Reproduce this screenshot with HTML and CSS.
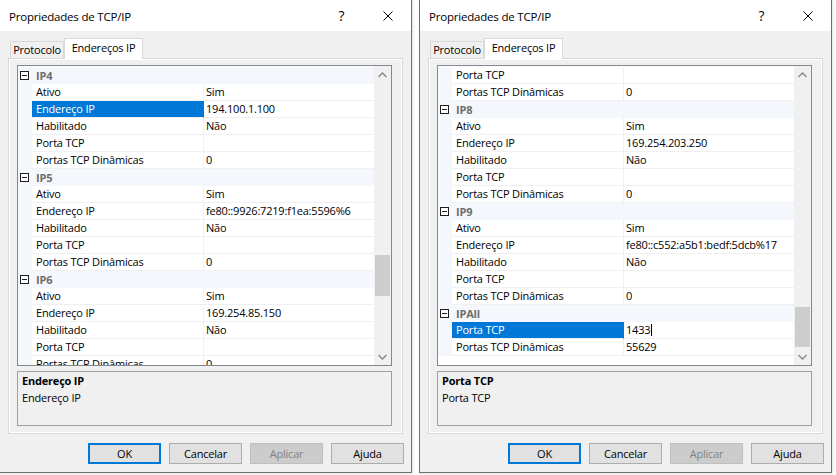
FILE: index.html
```html
<!DOCTYPE html>
<html lang="pt">
<head>
<meta charset="utf-8">
<title>Propriedades de TCP/IP</title>
<link rel="stylesheet" href="styles.css">
</head>
<body>

<div class="window win-left">
  <div class="titlebar">
    <span class="title">Propriedades de TCP/IP</span>
    <div class="cap-btn help">?</div>
    <div class="cap-btn close"><svg width="10" height="10" viewBox="0 0 10 10"><path d="M0.5 0.5L9.5 9.5M9.5 0.5L0.5 9.5" stroke="#000" stroke-width="1" fill="none"/></svg></div>
  </div>
  <div class="client">
    <div class="tabs">
      <div class="tab">Protocolo</div>
      <div class="tab active">Endereços IP</div>
    </div>
    <div class="panel">
      <div class="pg">
        <div class="grid">
          <div class="rows">
            <div class="cat"><span class="box"></span><span class="cat-name">IP4</span></div>
            <div class="prop"><div class="m"></div><div class="n">Ativo</div><div class="v">Sim</div></div>
            <div class="prop sel"><div class="m"></div><div class="n">Endereço IP</div><div class="v">194.100.1.100</div></div>
            <div class="prop"><div class="m"></div><div class="n">Habilitado</div><div class="v">Não</div></div>
            <div class="prop"><div class="m"></div><div class="n">Porta TCP</div><div class="v"></div></div>
            <div class="prop"><div class="m"></div><div class="n">Portas TCP Dinâmicas</div><div class="v">0</div></div>
            <div class="cat"><span class="box"></span><span class="cat-name">IP5</span></div>
            <div class="prop"><div class="m"></div><div class="n">Ativo</div><div class="v">Sim</div></div>
            <div class="prop"><div class="m"></div><div class="n">Endereço IP</div><div class="v">fe80::9926:7219:f1ea:5596%6</div></div>
            <div class="prop"><div class="m"></div><div class="n">Habilitado</div><div class="v">Não</div></div>
            <div class="prop"><div class="m"></div><div class="n">Porta TCP</div><div class="v"></div></div>
            <div class="prop"><div class="m"></div><div class="n">Portas TCP Dinâmicas</div><div class="v">0</div></div>
            <div class="cat"><span class="box"></span><span class="cat-name">IP6</span></div>
            <div class="prop"><div class="m"></div><div class="n">Ativo</div><div class="v">Sim</div></div>
            <div class="prop"><div class="m"></div><div class="n">Endereço IP</div><div class="v">169.254.85.150</div></div>
            <div class="prop"><div class="m"></div><div class="n">Habilitado</div><div class="v">Não</div></div>
            <div class="prop"><div class="m"></div><div class="n">Porta TCP</div><div class="v"></div></div>
            <div class="prop"><div class="m"></div><div class="n">Portas TCP Dinâmicas</div><div class="v">0</div></div>
          </div>
          <div class="scrollbar">
            <div class="arrow"><svg width="9" height="6" viewBox="0 0 9 6"><path d="M0.5 5L4.5 1L8.5 5" stroke="#868686" stroke-width="1.3" fill="none"/></svg></div>
            <div class="track"><div class="thumb thumb-left"></div></div>
            <div class="arrow"><svg width="9" height="6" viewBox="0 0 9 6"><path d="M0.5 1L4.5 5L8.5 1" stroke="#868686" stroke-width="1.3" fill="none"/></svg></div>
          </div>
        </div>
        <div class="desc">
          <div class="desc-title">Endereço IP</div>
          <div class="desc-text">Endereço IP</div>
        </div>
      </div>
    </div>
    <div class="buttons">
      <button class="btn default">OK</button>
      <button class="btn">Cancelar</button>
      <button class="btn disabled">Aplicar</button>
      <button class="btn">Ajuda</button>
    </div>
  </div>
</div>

<div class="window win-right">
  <div class="titlebar">
    <span class="title">Propriedades de TCP/IP</span>
    <div class="cap-btn help">?</div>
    <div class="cap-btn close"><svg width="10" height="10" viewBox="0 0 10 10"><path d="M0.5 0.5L9.5 9.5M9.5 0.5L0.5 9.5" stroke="#000" stroke-width="1" fill="none"/></svg></div>
  </div>
  <div class="client">
    <div class="tabs">
      <div class="tab">Protocolo</div>
      <div class="tab active">Endereços IP</div>
    </div>
    <div class="panel">
      <div class="pg">
        <div class="grid">
          <div class="rows">
            <div class="prop"><div class="m"></div><div class="n">Porta TCP</div><div class="v"></div></div>
            <div class="prop"><div class="m"></div><div class="n">Portas TCP Dinâmicas</div><div class="v">0</div></div>
            <div class="cat"><span class="box"></span><span class="cat-name">IP8</span></div>
            <div class="prop"><div class="m"></div><div class="n">Ativo</div><div class="v">Sim</div></div>
            <div class="prop"><div class="m"></div><div class="n">Endereço IP</div><div class="v">169.254.203.250</div></div>
            <div class="prop"><div class="m"></div><div class="n">Habilitado</div><div class="v">Não</div></div>
            <div class="prop"><div class="m"></div><div class="n">Porta TCP</div><div class="v"></div></div>
            <div class="prop"><div class="m"></div><div class="n">Portas TCP Dinâmicas</div><div class="v">0</div></div>
            <div class="cat"><span class="box"></span><span class="cat-name">IP9</span></div>
            <div class="prop"><div class="m"></div><div class="n">Ativo</div><div class="v">Sim</div></div>
            <div class="prop"><div class="m"></div><div class="n">Endereço IP</div><div class="v">fe80::c552:a5b1:bedf:5dcb%17</div></div>
            <div class="prop"><div class="m"></div><div class="n">Habilitado</div><div class="v">Não</div></div>
            <div class="prop"><div class="m"></div><div class="n">Porta TCP</div><div class="v"></div></div>
            <div class="prop"><div class="m"></div><div class="n">Portas TCP Dinâmicas</div><div class="v">0</div></div>
            <div class="cat"><span class="box"></span><span class="cat-name">IPAll</span></div>
            <div class="prop sel"><div class="m"></div><div class="n">Porta TCP</div><div class="v">1433<span class="caret"></span></div></div>
            <div class="prop"><div class="m"></div><div class="n">Portas TCP Dinâmicas</div><div class="v">55629</div></div>
          </div>
          <div class="scrollbar">
            <div class="arrow"><svg width="9" height="6" viewBox="0 0 9 6"><path d="M0.5 5L4.5 1L8.5 5" stroke="#868686" stroke-width="1.3" fill="none"/></svg></div>
            <div class="track"><div class="thumb thumb-right"></div></div>
            <div class="arrow"><svg width="9" height="6" viewBox="0 0 9 6"><path d="M0.5 1L4.5 5L8.5 1" stroke="#868686" stroke-width="1.3" fill="none"/></svg></div>
          </div>
        </div>
        <div class="desc">
          <div class="desc-title">Porta TCP</div>
          <div class="desc-text">Porta TCP</div>
        </div>
      </div>
    </div>
    <div class="buttons">
      <button class="btn default">OK</button>
      <button class="btn">Cancelar</button>
      <button class="btn disabled">Aplicar</button>
      <button class="btn">Ajuda</button>
    </div>
  </div>
</div>

</body>
</html>
```
FILE: styles.css
```css
* { box-sizing: border-box; }

html, body {
  margin: 0;
  padding: 0;
  background: #ffffff;
}

body {
  display: flex;
  align-items: flex-start;
  gap: 7px;
  font-family: "Open Sans", "Noto Sans", sans-serif;
  font-size: 11px;
  letter-spacing: -0.2px;
  color: #000;
  overflow: hidden;
  height: 475px;
}

.window {
  width: 413px;
  height: 474px;
  margin-top: -1px;
  border: 1px solid #6f6f6f;
  background: #f0f0f0;
  display: flex;
  flex-direction: column;
  box-shadow: 1px 1px 3px rgba(0,0,0,0.12);
}

.win-left { margin-left: -1px; }

/* title bar */
.titlebar {
  height: 31px;
  background: #ffffff;
  display: flex;
  align-items: center;
  flex: none;
}

.title {
  flex: 1;
  padding-left: 9px;
  font-size: 11.5px;
  padding-top: 1px;
}

.cap-btn {
  width: 46px;
  height: 31px;
  display: flex;
  align-items: center;
  justify-content: center;
}

.help {
  font-size: 14px;
  letter-spacing: 0;
  font-weight: 400;
  padding-right: 1px;
}

/* client area */
.client {
  padding: 0 8px;
  flex: 1;
  display: flex;
  flex-direction: column;
}

.tabs {
  height: 27px;
  display: flex;
  align-items: flex-end;
  padding-left: 2px;
  flex: none;
}

.tab {
  height: 17px;
  border: 1px solid #d9d9d9;
  border-bottom: none;
  background: #f0f0f0;
  display: flex;
  align-items: center;
  justify-content: center;
  width: 54px;
  padding-bottom: 1px;
}

.tab.active {
  height: 21px;
  width: 79px;
  margin-left: 0;
  background: #ffffff;
  margin-bottom: -1px;
  position: relative;
  z-index: 1;
  padding-bottom: 3px;
}

.panel {
  width: 395px;
  height: 376px;
  border: 1px solid #d9d9d9;
  background: #ffffff;
  padding: 1px;
  flex: none;
}

.pg {
  height: 100%;
  background: #f0f0f0;
  padding: 5px 0 0 7px;
}

/* property grid */
.grid {
  width: 375px;
  height: 301px;
  border: 1px solid #828790;
  background: #ffffff;
  display: flex;
}

.rows {
  flex: 1;
  overflow: hidden;
  padding-top: 1px;
}

.cat {
  height: 17px;
  background: #f4f7fc;
  display: flex;
  align-items: center;
}

.box {
  width: 9px;
  height: 9px;
  border: 1px solid #1e1e1e;
  margin-left: 2px;
  position: relative;
  background: #fff;
}

.box::after {
  content: "";
  position: absolute;
  left: 1px;
  top: 3px;
  width: 5px;
  height: 1px;
  background: #1e1e1e;
}

.cat-name {
  margin-left: 7px;
  font-weight: 700;
  color: #6d6d6d;
  line-height: 16px;
}

.prop {
  height: 17px;
  display: flex;
}

.m {
  width: 14px;
  background: #f4f7fc;
  flex: none;
}

.n {
  width: 172px;
  flex: none;
  padding-left: 4px;
  border-right: 1px solid #f0f0f0;
  border-bottom: 1px solid #f0f0f0;
  line-height: 16px;
  white-space: nowrap;
}

.v {
  flex: 1;
  padding-left: 2px;
  border-bottom: 1px solid #f0f0f0;
  line-height: 16px;
  white-space: nowrap;
}

.prop.sel .n {
  background: #0078d7;
  color: #ffffff;
  border-right-color: #0078d7;
}

.caret {
  display: inline-block;
  width: 1px;
  height: 12px;
  background: #000;
  vertical-align: -2px;
  margin-left: 1px;
}

/* scrollbar */
.scrollbar {
  width: 17px;
  flex: none;
  background: #f0f0f0;
  display: flex;
  flex-direction: column;
}

.arrow {
  height: 17px;
  display: flex;
  align-items: center;
  justify-content: center;
}

.track {
  flex: 1;
}

.thumb {
  margin: 0 1px;
  background: #cdcdcd;
}

.thumb-left { margin-top: 172px; height: 41px; }
.thumb-right { margin-top: 224px; height: 40px; }

/* description */
.desc {
  width: 375px;
  height: 55px;
  margin-top: 5px;
  border: 1px solid #a0a0a0;
  background: #f0f0f0;
  padding: 0 4px;
  line-height: 17px;
}

.desc-title { font-weight: 700; }

/* buttons */
.buttons {
  display: flex;
  justify-content: flex-end;
  gap: 8px;
  margin-top: 9px;
  margin-right: -1px;
}

.btn {
  width: 73px;
  height: 21px;
  border: 1px solid #adadad;
  background: #e1e1e1;
  font-family: "Open Sans", "Noto Sans", sans-serif;
  font-size: 11px;
  letter-spacing: -0.2px;
  color: #000;
  padding: 0;
}

.btn.default {
  border: 2px solid #0078d7;
}

.btn.disabled {
  background: #cccccc;
  border-color: #bfbfbf;
  color: #838383;
}
```
